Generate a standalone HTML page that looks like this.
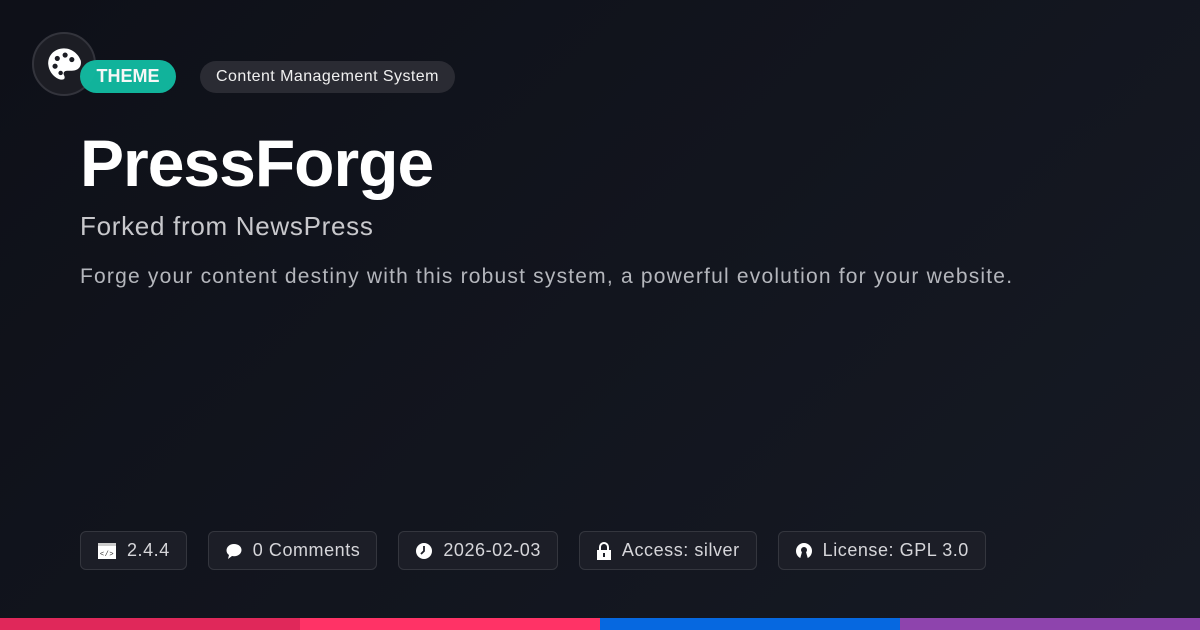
<!DOCTYPE html>
<html><head><meta charset="utf-8"><style>
*{margin:0;padding:0;box-sizing:border-box}
body{width:1200px;height:630px;overflow:hidden;font-family:"Liberation Sans",sans-serif;background:linear-gradient(135deg,#0e1018 0%,#161a24 100%);position:relative;color:#fff}
.logo{position:absolute;left:32px;top:32px;width:64px;height:64px;border-radius:50%;background:#1c1d24;border:2px solid #33343c;display:flex;align-items:center;justify-content:center}
.theme{position:absolute;left:80px;top:60px;width:96px;height:33px;border-radius:17px;background:#12b9a0;font-weight:bold;font-size:18px;line-height:33px;text-align:center;opacity:.97}
.cat{position:absolute;left:200px;top:61px;height:32px;padding:0 16px;border-radius:16px;background:#2a2b33;font-size:16px;line-height:32px;color:#f0f0f0;letter-spacing:0.45px}
h1{position:absolute;left:80px;top:125px;font-size:66px;font-weight:bold;letter-spacing:-1px}
.sub{position:absolute;left:80px;top:211px;font-size:26px;color:#c8c8cc;letter-spacing:0.7px}
.desc{position:absolute;left:80px;top:265px;font-size:21px;color:#b4b6bc;letter-spacing:1.2px}
.metas{position:absolute;left:80px;top:531px;display:flex;gap:21px}
.m{height:39px;border:1px solid #34363e;border-radius:6px;background:#1c1e27;display:flex;align-items:center;padding:0 16px;font-size:18px;color:#d6d6da;gap:10px;letter-spacing:0.55px}
.bar{position:absolute;left:0;top:618px;height:12px;width:1200px;display:flex}
.bar div{flex:1}
</style></head><body>
<div class="logo"><svg width="38" height="38" viewBox="0 0 34 34"><path d="M17 3C8 3 2 10 3 18c1 8 8 13 12 13 3 0 3-2 2-4-1-2 0-4 3-4h4c6 0 9-4 8-9C30 8 24 3 17 3z" fill="#fff"/><circle cx="11" cy="12" r="2.3" fill="#1c1d24"/><circle cx="18" cy="9" r="2.3" fill="#1c1d24"/><circle cx="24" cy="13" r="2.3" fill="#1c1d24"/><circle cx="9" cy="19" r="2.3" fill="#1c1d24"/><circle cx="14" cy="25" r="2" fill="#1c1d24"/></svg></div>
<div class="theme">THEME</div>
<div class="cat">Content Management System</div>
<h1>PressForge</h1>
<div class="sub">Forked from NewsPress</div>
<div class="desc">Forge your content destiny with this robust system, a powerful evolution for your website.</div>
<div class="metas">
<div class="m"><svg width="20" height="18" viewBox="0 0 20 18"><rect x="1" y="1" width="18" height="16" fill="#fff"/><rect x="1" y="1" width="18" height="3" fill="#ccc"/><text x="10" y="14" font-size="7" text-anchor="middle" fill="#333" font-family="Liberation Mono">&lt;/&gt;</text></svg>2.4.4</div>
<div class="m"><svg width="18" height="18" viewBox="0 0 18 18"><path d="M9 2C4.5 2 1.5 5 1.5 8.5c0 2 1 3.5 2.5 4.5L3 17l4-3c.7.1 1.3.2 2 .2 4.5 0 7.5-2.8 7.5-6.2S13.5 2 9 2z" fill="#fff"/></svg>0 Comments</div>
<div class="m"><svg width="18" height="18" viewBox="0 0 18 18"><circle cx="9" cy="9" r="8" fill="#fff"/><path d="M9 4v5l-3 3" stroke="#1c1e27" stroke-width="1.8" fill="none"/></svg>2026-02-03</div>
<div class="m"><svg width="16" height="20" viewBox="0 0 16 20"><path d="M4 9V6a4 4 0 0 1 8 0v3" stroke="#fff" stroke-width="2" fill="none"/><rect x="1" y="9" width="14" height="10" fill="#fff"/><rect x="7" y="12" width="2" height="4" fill="#1c1e27"/></svg>Access: silver</div>
<div class="m"><svg width="18" height="18" viewBox="0 0 18 18"><circle cx="9" cy="9" r="8" fill="#fff"/><circle cx="9" cy="8" r="3" fill="#1c1e27"/><path d="M7 10l-2 7h8l-2-7z" fill="#1c1e27"/></svg>License: GPL 3.0</div>
</div>
<div class="bar"><div style="background:#e0285a"></div><div style="background:#ff3366"></div><div style="background:#0668e0"></div><div style="background:#8e44ad"></div></div>
</body></html>
